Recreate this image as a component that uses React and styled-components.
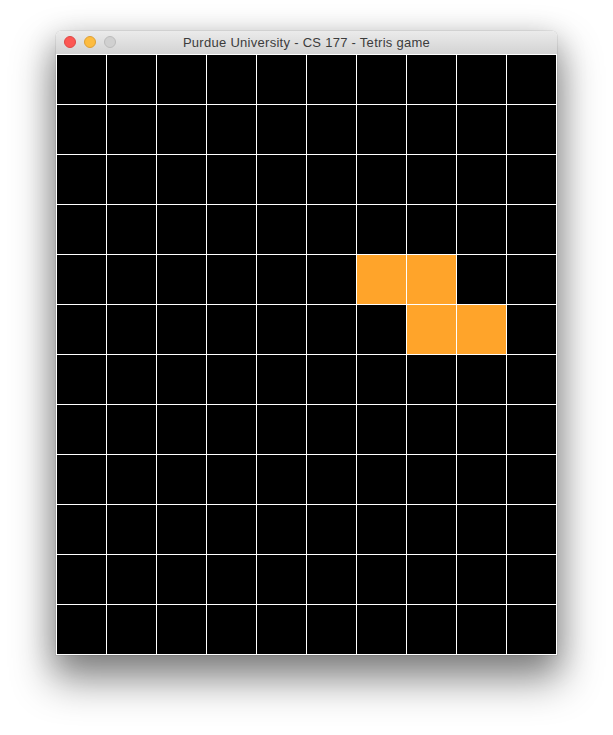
import React from "react";
import styled, { createGlobalStyle } from "styled-components";

const GlobalStyle = createGlobalStyle`
  html, body {
    margin: 0;
    padding: 0;
    background: #fff;
    overflow: hidden;
  }
`;

const Page = styled.div`
  width: 613px;
  height: 735px;
  padding: 31px 0 0 56px;
  box-sizing: border-box;
`;

const Window = styled.div`
  width: 501px;
  border-radius: 5px 5px 0 0;
  box-shadow: 0 0 0 0.5px rgba(0, 0, 0, 0.12), 0 22px 40px 4px rgba(0, 0, 0, 0.42),
    0 8px 30px rgba(0, 0, 0, 0.2);
`;

const TitleBar = styled.div`
  position: relative;
  height: 23px;
  display: flex;
  align-items: center;
  justify-content: center;
  border-radius: 5px 5px 0 0;
  background: linear-gradient(#ebebeb, #d3d3d3);
  font-family: "Liberation Sans", Arial, sans-serif;
  font-size: 13px;
  letter-spacing: 0.28px;
  color: #3c3c3c;
`;

const Lights = styled.div`
  position: absolute;
  left: 8px;
  top: 5px;
  display: flex;
  gap: 8px;
`;

const Light = styled.span`
  width: 12px;
  height: 12px;
  box-sizing: border-box;
  border-radius: 50%;
  background: ${(p) => p.$color};
  border: 1px solid ${(p) => p.$edge};
`;

const Board = styled.div`
  display: grid;
  grid-template-columns: repeat(10, 50px);
  grid-auto-rows: 50px;
  width: 501px;
  box-sizing: border-box;
  background: #000;
  border-right: 1px solid #fff;
  border-bottom: 1px solid #fff;
`;

const Cell = styled.div`
  box-sizing: border-box;
  border-left: 1px solid #fff;
  border-top: 1px solid #fff;
  background: ${(p) => (p.$filled ? "#ffa42a" : "#000")};
`;

const filled = new Set(["4-6", "4-7", "5-7", "5-8"]);

const cells = [];
for (let row = 0; row < 12; row++) {
  for (let col = 0; col < 10; col++) {
    cells.push(`${row}-${col}`);
  }
}

const App = () => {
  return (
    <Page>
      <GlobalStyle />
      <Window>
        <TitleBar>
          <Lights>
            <Light $color="#fc5753" $edge="#df4744" />
            <Light $color="#fdbc40" $edge="#dea034" />
            <Light $color="#d0d0d0" $edge="#bcbcbc" />
          </Lights>
          Purdue University - CS 177 - Tetris game
        </TitleBar>
        <Board>
          {cells.map((id) => (
            <Cell key={id} $filled={filled.has(id)} />
          ))}
        </Board>
      </Window>
    </Page>
  );
};

export default App;
